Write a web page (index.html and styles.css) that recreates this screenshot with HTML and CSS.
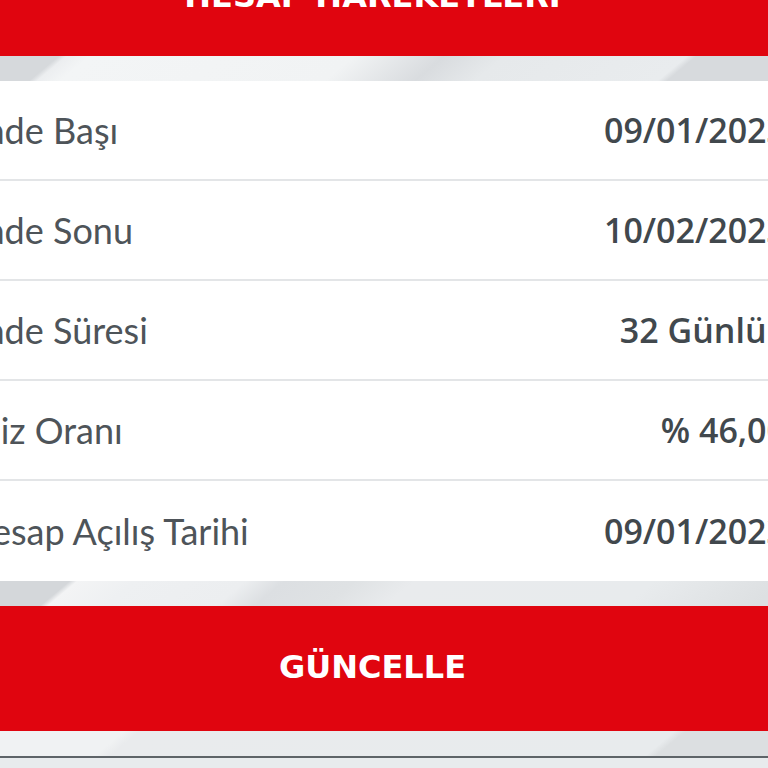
FILE: index.html
```html
<!DOCTYPE html>
<html lang="tr">

<head>
    <meta charset="UTF-8">
    <meta name="viewport" content="width=device-width, initial-scale=1.0">
    <title>Hesap Hareketleri</title>
    <link rel="stylesheet" href="styles.css">
</head>

<body>

    <div class="screen">
        <div class="page-head">
            <h1>HESAP HAREKETLERİ</h1>
        </div>

        <div class="details">
            <div class="row">
                <span class="label">Vade Başı</span>
                <span class="value">09/01/2023</span>
            </div>
            <div class="row">
                <span class="label">Vade Sonu</span>
                <span class="value">10/02/2023</span>
            </div>
            <div class="row">
                <span class="label">Vade Süresi</span>
                <span class="value">32 Günlük</span>
            </div>
            <div class="row">
                <span class="label">Faiz Oranı</span>
                <span class="value">% 46,00</span>
            </div>
            <div class="row">
                <span class="label">Hesap Açılış Tarihi</span>
                <span class="value">09/01/2023</span>
            </div>
        </div>

        <div class="actions">
            <button class="update">GÜNCELLE</button>
        </div>

        <div class="bottom-bar"></div>
    </div>

</body>

</html>
```

FILE: styles.css
```css
* {
    margin: 0;
    padding: 0;
    box-sizing: border-box;
}

body {
    background-color: #e8ebed;
    overflow: hidden;
    height: 768px;
}

/* ekran telefondan büyütülmüş gibi iki yandan taşıyor */
.screen {
    width: 845px;
    margin-left: -47px;
}

.page-head {
    background-color: #e0050f;
    margin-top: -44px;
    padding: 20px 6px 40px 0;
    text-align: center;
}

.page-head h1 {
    color: #fff;
    font-family: "DejaVu Sans", sans-serif;
    font-weight: bold;
    font-size: 32px;
    line-height: 40px;
}

.details {
    padding-top: 25px;
    background:
        linear-gradient(140deg,
            #d6d9dc 68px, #eceef0 73px, #f3f5f6 88px,
            #f1f3f4 258px, #d9dcdf 316px, #e6e9eb 355px,
            #e9ecee 472px, #d7dadd 478px) top / 100% 25px no-repeat,
        #e8ebed;
}

.row {
    height: 100px;
    padding: 0 12px;
    background-color: #fff;
    border-bottom: 2px solid #e3e5e7;
    display: flex;
    justify-content: space-between;
    align-items: center;
    white-space: nowrap;
}

.row:last-child {
    border-bottom: 0;
}

.label {
    font-family: Lato, "Open Sans", sans-serif;
    font-size: 36px;
    color: #4e5459;
}

.value {
    font-family: "Open Sans", Lato, sans-serif;
    font-size: 34px;
    font-weight: 600;
    color: #41484d;
}

.actions {
    padding: 25px 0;
    background:
        linear-gradient(140deg,
            #d4d7da 75px, #f3f4f5 80px, #eef0f2 117px,
            #eceef0 188px, #dcdfe2 213px, #dfe2e4 258px,
            #e9ebed 297px, #e8ebed 451px, #dde0e2 534px) top / 100% 25px no-repeat,
        linear-gradient(140deg,
            #f0f2f3 110px, #e9ebed 120px,
            #e8ebed 464px, #dcdfe1 471px) bottom / 100% 25px no-repeat,
        #e8ebed;
}

.update {
    display: flex;
    justify-content: center;
    align-items: center;
    width: 100%;
    height: 125px;
    padding: 0 6px 4px 0;
    border: 0;
    background-color: #e0050f;
    color: #fff;
    font-family: "DejaVu Sans", sans-serif;
    font-weight: bold;
    font-size: 32px;
    cursor: pointer;
}

.bottom-bar {
    height: 20px;
    border-top: 2px solid #5e6468;
    background-color: #e8ebed;
}
```
